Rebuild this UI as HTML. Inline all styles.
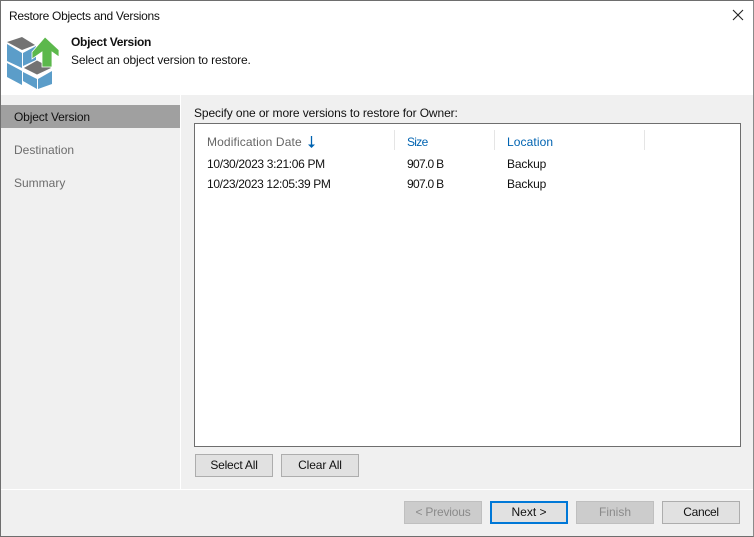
<!DOCTYPE html>
<html><head><meta charset="utf-8"><style>
html,body{margin:0;padding:0}
body{width:754px;height:537px;overflow:hidden;position:relative;background:#f0f0f0;font-family:"Liberation Sans",sans-serif;font-size:12px;color:#111}
.a{position:absolute;box-sizing:border-box}
.t{position:absolute;white-space:nowrap;line-height:14px;height:14px}
.b{position:absolute;box-sizing:border-box;width:78px;height:23px;background:#e1e1e1;border:1px solid #adadad;text-align:center;line-height:21px;color:#111}
.d{background:#ccc;border-color:#bfbfbf;color:#8a8a8a}
.h{color:#0063b1}
.s{position:absolute;width:1px;height:20px;top:130px;background:#e5e5e5}
</style></head><body>
<div class="a" style="left:0;top:0;width:754px;height:95px;background:#fff"></div>
<div class="t" style="left:9px;top:9px;letter-spacing:-.29px">Restore Objects and Versions</div>
<svg class="a" style="left:731px;top:8px" width="14" height="14" viewBox="0 0 14 14"><path d="M2 2L12 12M12 2L2 12" stroke="#222" stroke-width="1.1" fill="none"/></svg>
<svg class="a" style="left:0;top:30px" width="66" height="65" viewBox="0 30 66 65">
<path d="M7 42L22 37L35 45L22 50Z" fill="#737373"/>
<path d="M7 44L22 53V68L7 61Z" fill="#5b9dc9"/>
<path d="M23 53L36 46V60L23 66Z" fill="#5b9dc9"/>
<path d="M7 63L22 71V85L7 77Z" fill="#5b9dc9"/>
<path d="M23 68L37 60L52 68L37 75Z" fill="#737373" stroke="#fff" stroke-width=".8"/>
<path d="M23 72L37 79V89L23 81Z" fill="#5b9dc9"/>
<path d="M38 79L52 71V84L38 89Z" fill="#5b9dc9"/>
<path d="M45 37L59 50V57L52 52V67L42 67V52L32 59V52Z" fill="#5cb84c" stroke="#fff" stroke-width=".8"/>
</svg>
<div class="t" style="left:71px;top:35px;font-weight:bold;letter-spacing:-.28px">Object Version</div>
<div class="t" style="left:71px;top:53px;letter-spacing:-.14px">Select an object version to restore.</div>
<div class="a" style="left:180px;top:95px;width:1px;height:394px;background:#fff"></div>
<div class="a" style="left:1px;top:105px;width:179px;height:23px;background:#a0a0a0"></div>
<div class="t" style="left:14px;top:110px;letter-spacing:-.15px">Object Version</div>
<div class="t" style="left:14px;top:143px;color:#6d6d6d">Destination</div>
<div class="t" style="left:14px;top:176px;color:#6d6d6d">Summary</div>
<div class="t" style="left:194px;top:106px;letter-spacing:-.1px">Specify one or more versions to restore for Owner:</div>
<div class="a" style="left:194px;top:123px;width:547px;height:324px;background:#fff;border:1px solid #6e6e6e"></div>
<div class="t" style="left:207px;top:135px;color:#666;letter-spacing:.12px">Modification Date</div>
<svg class="a" style="left:307px;top:135px" width="10" height="14" viewBox="0 0 10 14"><path d="M4.5 1V10" stroke="#0063b1" stroke-width="1.3" fill="none"/><path d="M1 9.5H8L4.5 13Z" fill="#0063b1"/></svg>
<div class="s" style="left:394px"></div><div class="s" style="left:494px"></div><div class="s" style="left:644px"></div>
<div class="t h" style="left:407px;top:135px;letter-spacing:-.7px">Size</div>
<div class="t h" style="left:507px;top:135px;letter-spacing:.1px">Location</div>
<div class="t" style="left:207px;top:157px;letter-spacing:-.33px">10/30/2023 3:21:06 PM</div>
<div class="t" style="left:407px;top:157px;letter-spacing:-.7px">907.0 B</div>
<div class="t" style="left:507px;top:157px;letter-spacing:-.15px">Backup</div>
<div class="t" style="left:207px;top:177px;letter-spacing:-.36px">10/23/2023 12:05:39 PM</div>
<div class="t" style="left:407px;top:177px;letter-spacing:-.7px">907.0 B</div>
<div class="t" style="left:507px;top:177px;letter-spacing:-.15px">Backup</div>
<div class="b" style="left:195px;top:454px;letter-spacing:-.2px">Select All</div>
<div class="b" style="left:281px;top:454px;letter-spacing:-.1px">Clear All</div>
<div class="a" style="left:0;top:489px;width:754px;height:1px;background:#fff"></div>
<div class="b d" style="left:404px;top:501px;letter-spacing:-.2px">&lt; Previous</div>
<div class="b" style="left:490px;top:501px;border:2px solid #0078d7;line-height:19px">Next &gt;</div>
<div class="b d" style="left:576px;top:501px">Finish</div>
<div class="b" style="left:662px;top:501px;letter-spacing:-.3px">Cancel</div>
<div class="a" style="left:0;top:0;width:754px;height:537px;border:1px solid #6e6e6e;border-right-color:#8a8a8a"></div>
</body></html>
